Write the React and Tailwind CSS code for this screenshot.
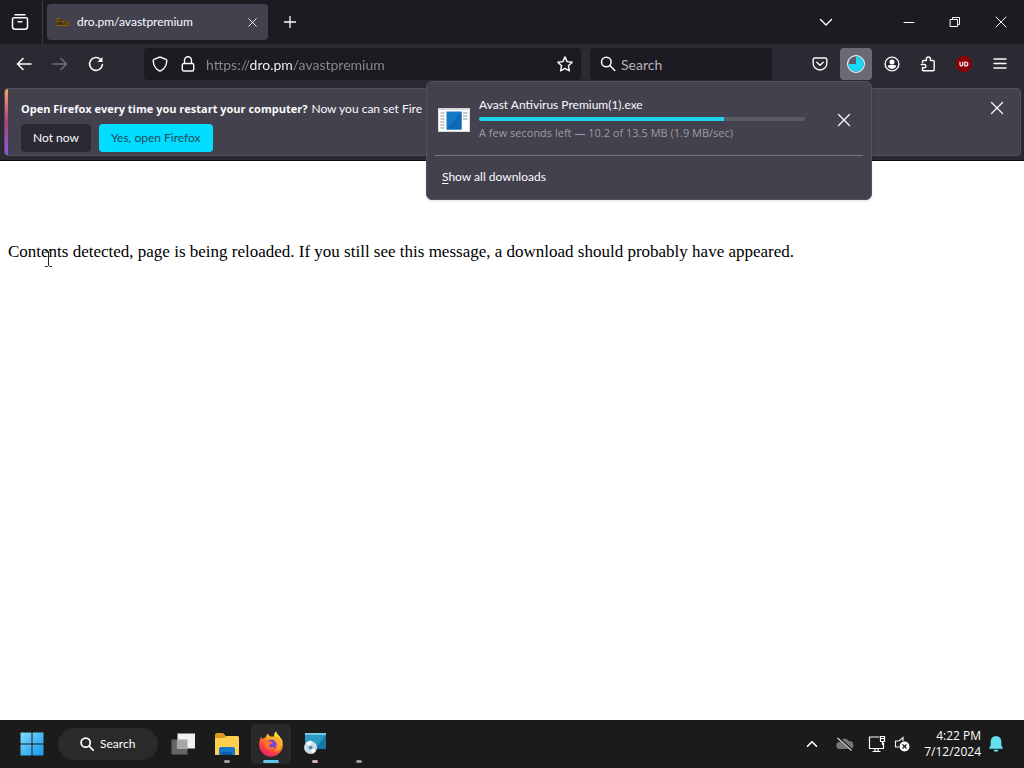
import React from "react";

function Icon({ children, className = "size-4", box = 16, width = 1.4, ...rest }) {
  return (
    <svg
      viewBox={`0 0 ${box} ${box}`}
      className={`shrink-0 ${className}`}
      fill="none"
      stroke="currentColor"
      strokeWidth={width}
      strokeLinecap="round"
      strokeLinejoin="round"
      aria-hidden="true"
      {...rest}
    >
      {children}
    </svg>
  );
}

function CloseIcon({ className = "size-4" }) {
  return (
    <Icon className={className} width={1.3}>
      <path d="M2.500 2.500l11 11M13.500 2.500l-11 11" />
    </Icon>
  );
}

function ToolButton({ label, className = "", children }) {
  return (
    <button
      type="button"
      aria-label={label}
      className={`flex size-8 shrink-0 items-center justify-center rounded ${className}`}
    >
      {children}
    </button>
  );
}

function WindowButton({ label, children }) {
  return (
    <button type="button" aria-label={label} className="flex h-11 w-[46px] items-center justify-center">
      {children}
    </button>
  );
}

function TabBar() {
  return (
    <div className="flex h-11 items-center bg-[#1c1b22]">
      <div className="flex h-11 w-[43px] items-center justify-center border-r border-[#3c3b44] pr-[2px]">
        <button type="button" aria-label="Firefox View" className="flex size-8 items-center justify-center">
          <Icon className="size-[18px]" box={18} width={1.500}>
            <path d="M4 1.800h10M2.800 4.800h12.400a1.300 1.300 0 0 1 1.300 1.300v7.600a2.500 2.500 0 0 1-2.500 2.500H4a2.500 2.500 0 0 1-2.500-2.500V6.100a1.300 1.300 0 0 1 1.300-1.300zM7.200 8.800h3.600" />
          </Icon>
        </button>
      </div>
      <div className="ml-1 flex h-9 w-[221px] items-center rounded bg-[#42414d] pr-2 pl-2">
        <svg viewBox="0 0 16 16" className="size-4 shrink-0" aria-hidden="true">
          <path d="M1 4h4l1 2h5l1 2h3v4H1z" fill="#554013" />
          <path d="M1 4.500h4M1 7h3M6 7.500h4M2 11.500h12M12 9h2.500" stroke="#8a6110" strokeWidth="1" />
          <path d="M4 8.500h3v2H4z" fill="#2d2a2e" />
        </svg>
        <span className="ml-[6px] flex-1 truncate">dro.pm/avastpremium</span>
        <button type="button" aria-label="Close tab" className="flex size-4 items-center justify-center">
          <CloseIcon className="size-[11px]" />
        </button>
      </div>
      <button type="button" aria-label="New tab" className="ml-[6px] flex size-8 items-center justify-center">
        <Icon className="size-4" width={1.300}>
          <path d="M8 2.500v11M2.500 8h11" />
        </Icon>
      </button>
      <div className="flex-1" />
      <ToolButton label="List all tabs" className="mr-11">
        <Icon>
          <path d="M2.500 5.500L8 11l5.500-5.500" />
        </Icon>
      </ToolButton>
      <WindowButton label="Minimize">
        <Icon className="size-3" box={12} width={1}>
          <path d="M1 6.500h10" />
        </Icon>
      </WindowButton>
      <WindowButton label="Restore">
        <Icon className="size-3" box={12} width={1}>
          <path d="M1.500 3.500h7v7h-7zM3.500 3.500v-2h7v7h-2" />
        </Icon>
      </WindowButton>
      <WindowButton label="Close">
        <Icon className="size-3" box={12} width={1}>
          <path d="M1 1l10 10M11 1L1 11" />
        </Icon>
      </WindowButton>
    </div>
  );
}

function NavBar() {
  return (
    <div className="flex h-10 items-center bg-[#2b2a33] px-2">
      <div className="flex gap-1">
        <ToolButton label="Back">
          <Icon width={1.600}>
            <path d="M15 8H1.500M7 2.500L1.500 8 7 13.500" />
          </Icon>
        </ToolButton>
        <ToolButton label="Forward" className="text-[#717079]">
          <Icon width={1.600}>
            <path d="M1 8h13.500M9 2.500L14.500 8 9 13.500" />
          </Icon>
        </ToolButton>
        <ToolButton label="Reload">
          <Icon width={1.600}>
            <path d="M13.200 4.200A6.400 6.400 0 1 0 14.400 8.500" />
            <path d="M14.500 1v5h-5z" fill="currentColor" stroke="none" />
          </Icon>
        </ToolButton>
      </div>
      <div className="ml-8 flex h-8 flex-1 items-center rounded bg-[#1c1b22] px-2">
        <Icon className="size-4">
          <path d="M8 1l6 2.300c.6.200.8.600.8 1.100C14.700 9 12.500 13 8 15.200 3.500 13 1.300 9 1.200 4.400c0-.5.200-.9.800-1.100z" />
        </Icon>
        <Icon className="ml-3 size-4">
          <path d="M3.800 7.500h8.400a1.500 1.500 0 0 1 1.500 1.500v4.500a1.500 1.500 0 0 1-1.500 1.500H3.800a1.500 1.500 0 0 1-1.500-1.500V9a1.500 1.500 0 0 1 1.500-1.500zM4.500 7.500V4.300a3.500 3.500 0 0 1 7 0v3.200" />
        </Icon>
        <input
          type="text"
          aria-label="Address"
          defaultValue="https://dro.pm/avastpremium"
          className="ml-[10px] h-6 min-w-0 flex-1 bg-[linear-gradient(90deg,#8a8992_44px,#fbfbfe_44px,#fbfbfe_87px,#8a8992_87px)] bg-clip-text text-sm text-transparent outline-none"
        />
        <button type="button" aria-label="Bookmark this page" className="flex size-4 items-center justify-center">
          <Icon>
            <path d="M8 .9l2.100 4.700 5.100.6-3.800 3.500 1 5.100L8 12.300l-4.400 2.500 1-5.100L.8 6.200l5.100-.6z" />
          </Icon>
        </button>
      </div>
      <div className="mr-8 ml-[9px] flex h-8 w-[182px] items-center rounded bg-[#1c1b22] px-[10px]">
        <Icon width={1.500}>
          <circle cx="6.300" cy="6" r="4.800" />
          <path d="M9.800 9.500l5 5" />
        </Icon>
        <input
          type="text"
          aria-label="Search"
          placeholder="Search"
          className="ml-[5px] h-6 w-full min-w-0 bg-transparent text-sm placeholder:text-[#b4b3ba] outline-none"
        />
      </div>
      <div className="flex gap-1">
        <ToolButton label="Save to Pocket">
          <Icon>
            <path d="M2.500 2h11a1.300 1.300 0 0 1 1.300 1.300v4.200a6.800 6.500 0 0 1-13.600 0V3.300A1.300 1.300 0 0 1 2.500 2zM4.800 6.200L8 9.300l3.200-3.100" />
          </Icon>
        </ToolButton>
        <ToolButton label="Downloads" className="bg-[#6b6a72]">
          <svg viewBox="0 0 20 20" className="size-5" aria-hidden="true">
            <circle cx="10" cy="10" r="8.400" fill="#5b5b66" stroke="#e8f8fc" strokeWidth="1.200" />
            <path d="M10 10V2.400A7.600 7.600 0 1 1 2.400 10z" fill="#16d9f5" />
          </svg>
        </ToolButton>
        <ToolButton label="Account">
          <Icon>
            <circle cx="8" cy="8" r="6.900" />
            <circle cx="8" cy="6" r="2.500" fill="currentColor" stroke="none" />
            <path d="M3.800 10.800c0-1 .7-1.800 1.700-1.800h5c1 0 1.700.8 1.700 1.800A5.200 5.200 0 0 1 8 12.900a5.200 5.200 0 0 1-4.200-2.100z" fill="currentColor" stroke="none" />
          </Icon>
        </ToolButton>
        <ToolButton label="Extensions">
          <Icon>
            <path d="M2.500 6.500V5.500A1 1 0 0 1 3.500 4.500H6.400V3a2 2 0 0 1 4 0v1.500h2.800a1 1 0 0 1 1 1v8.300a1 1 0 0 1-1 1H3.500a1 1 0 0 1-1-1V11.800H4.300a1.600 1.600 0 0 0 0-3.300H1.200" />
          </Icon>
        </ToolButton>
        <ToolButton label="uBlock Origin">
          <span className="flex size-4 items-center justify-center rounded-full bg-[#8b0009]">
            <Icon className="size-[10px]" box={10} width={1.200}>
              <path d="M1 3v2.400a1.400 1.400 0 0 0 2.800 0V3M5.800 3v4h1a2 2 0 0 0 0-4z" />
            </Icon>
          </span>
        </ToolButton>
        <ToolButton label="Open application menu">
          <Icon width={1.400}>
            <path d="M2 3h12M2 7.500h12M2 12h12" />
          </Icon>
        </ToolButton>
      </div>
    </div>
  );
}

function Notification() {
  return (
    <div className="border-b border-[#0c0c0d] bg-[#2b2a33] pt-1 pr-[3px] pb-1 pl-1">
      <div className="flex h-[68px] overflow-hidden rounded border border-[#52515d] bg-[#42414d]">
        <div className="w-[3px] shrink-0 bg-linear-to-b from-[#f5a35c] via-[#b83a78] to-[#8a55e8]" />
        <div className="min-w-0 flex-1 pt-3 pl-[13px]">
          <p className="flex items-baseline gap-1 whitespace-nowrap leading-4">
            <strong className="font-['Open_Sans',sans-serif] text-[11px] font-bold">
              Open Firefox every time you restart your computer?
            </strong>
            <span>Now you can set Fire</span>
          </p>
          <div className="mt-[7px] flex gap-2">
            <button type="button" className="h-7 rounded bg-[#2b2a33] px-3">Not now</button>
            <button type="button" className="h-7 rounded bg-[#00ddff] px-3 text-[#1f4a5a]">Yes, open Firefox</button>
          </div>
        </div>
        <button type="button" aria-label="Close notification" className="mt-[3px] mr-[7px] flex size-8 shrink-0 items-center justify-center">
          <CloseIcon />
        </button>
      </div>
    </div>
  );
}

function DownloadsPanel() {
  return (
    <section
      aria-label="Downloads"
      className="absolute top-[81px] right-[152px] z-10 w-[446px] rounded-md border border-[#52515e] bg-[#42414d] px-2 pb-[6px] shadow-sm"
    >
      <div className="flex h-[73px] items-center pt-[2px] pl-[3px]">
        <svg viewBox="0 0 32 24" className="h-6 w-8 shrink-0" aria-hidden="true">
          <path d="M0 0h32v24H0z" fill="#d5dade" />
          <path d="M1 2h30v21H1z" fill="#fff" />
          <path d="M8.500 3.500h15v18h-15z" fill="#1478c8" />
          <path d="M8.500 21.500l15-18v18z" fill="#1068b4" />
          <path d="M2.500 5h4M2.500 8h4M2.500 11h4M2.500 14h4M2.500 17h4M2.500 20h4M25 5h4.500M25 8h4.500M25 11h4.500" stroke="#87939c" />
        </svg>
        <div className="ml-[9px] w-[326px] pb-[2px]">
          <p className="leading-4">Avast Antivirus Premium(1).exe</p>
          <div
            role="progressbar"
            aria-label="Download progress"
            aria-valuemin={0}
            aria-valuemax={100}
            aria-valuenow={75}
            className="mt-1 h-1 overflow-hidden rounded-full bg-[#5b5a66]"
          >
            <div className="h-full w-3/4 bg-[#1bd5e8]" />
          </div>
          <p className="mt-1 font-['Open_Sans',sans-serif] text-[11px] leading-4 text-[#9d9ca6]">
            A few seconds left — 10.2 of 13.5 MB (1.9 MB/sec)
          </p>
        </div>
        <button type="button" aria-label="Cancel download" className="ml-[23px] flex size-8 items-center justify-center">
          <CloseIcon />
        </button>
      </div>
      <hr className="border-[#77767f]" />
      <button type="button" className="mt-[5px] flex h-8 w-full items-center pl-[7px]">
        <span><u className="underline-offset-2">S</u>how all downloads</span>
      </button>
    </section>
  );
}

function TaskButton({ label, active = false, indicator = "", children }) {
  return (
    <button
      type="button"
      aria-label={label}
      className={`flex h-10 w-10 flex-col items-center rounded pt-1 ${active ? "bg-[#292929]" : ""}`}
    >
      <span className="flex h-8 items-center">{children}</span>
      {indicator && <span className={`h-[3px] shrink-0 rounded-full ${indicator}`} />}
    </button>
  );
}

function Taskbar() {
  return (
    <footer className="flex h-12 items-center bg-[#1b1b1b] text-white">
      <button type="button" aria-label="Start" className="ml-3 flex size-10 items-center justify-center">
        <svg viewBox="0 0 24 24" className="size-6" aria-hidden="true">
          <defs>
            <linearGradient id="start" x1="0" y1="0" x2="1" y2="1">
              <stop offset="0" stopColor="#7fdcfb" />
              <stop offset="1" stopColor="#1697ef" />
            </linearGradient>
          </defs>
          <path d="M.5.5h11v11H.5zM12.500.5h11v11h-11zM.5 12.500h11v11H.5zM12.500 12.500h11v11h-11z" fill="url(#start)" />
        </svg>
      </button>
      <button type="button" className="ml-[6px] flex h-8 w-[100px] items-center rounded-full bg-[#2a2a2a] pl-[22px]">
        <Icon className="size-[14px]" width={2}>
          <circle cx="6.500" cy="6.500" r="5.200" />
          <path d="M10.500 10.500l4.500 4.500" />
        </Icon>
        <span className="ml-[6px]">Search</span>
      </button>
      <div className="ml-[5px] flex gap-1">
        <TaskButton label="Task view">
          <svg viewBox="0 0 24 24" className="size-6" aria-hidden="true">
            <path d="M.5 7.500h16v15H.5z" fill="#666" />
            <path d="M6.500 1.500h17.500v15H6.500z" fill="#f1f1f1" />
            <path d="M6.500 7.500h10v9h-10z" fill="#a6a6a6" />
          </svg>
        </TaskButton>
        <TaskButton label="File Explorer" indicator="w-[6px] bg-[#9a9a9a]">
          <svg viewBox="0 0 26 24" className="h-6 w-[26px]" aria-hidden="true">
            <path d="M1 3a2 2 0 0 1 2-2h6l3 3h11a2 2 0 0 1 2 2v4H1z" fill="#d99a1c" />
            <path d="M1 6h9l3-2h10a2 2 0 0 1 2 2v17H1z" fill="#ffd04d" />
            <path d="M5 23v-6a2 2 0 0 1 2-2h12a2 2 0 0 1 2 2v6z" fill="#1674c9" />
            <path d="M8 20h10v3H8z" fill="#0b5ba8" />
          </svg>
        </TaskButton>
        <TaskButton label="Firefox" active indicator="w-4 bg-[#5ec6ee]">
          <svg viewBox="0 0 26 26" className="size-[26px]" aria-hidden="true">
            <defs>
              <linearGradient id="fox" x1=".8" y1="0" x2=".25" y2="1">
                <stop offset="0" stopColor="#fff04a" />
                <stop offset=".35" stopColor="#ffac1f" />
                <stop offset=".65" stopColor="#ff4c39" />
                <stop offset="1" stopColor="#e3197b" />
              </linearGradient>
            </defs>
            <path d="M3.500 5.500c0 1.200.2 1.800.8 2.400C5.500 7 6.500 6.600 7.700 6.500 8 4.700 9 3.400 10.400 2.500c0 1.700 1 2.700 2.600 3.200 1-.2 2-.2 3 .1C15.800 3.500 16.700 1.500 18.300.3c.3 2 1.400 3 2.800 4.500 1.100 1.200 1.700 2.200 2 3.400l.5-.8c.8 1.900 1.200 4 1.200 6.300A11.800 11.800 0 0 1 1.200 14C1 10.800 1.800 7.800 3.500 5.500z" fill="url(#fox)" />
            <circle cx="13.500" cy="13.500" r="5" fill="#7545d8" />
            <path d="M6.500 9.500c2.500-.8 4.500-.2 5.700 1.200 1.600.1 2.800.2 2.700 1-.2.900-2 1.200-2.900 1.800-1 .7-.8 2.200.5 2.800 1.500.7 3-.4 4.400.2-1 2-3.200 2.900-5.600 2.400-3.600-.8-5.700-4.500-4.800-9.400z" fill="#ff702c" />
            <path d="M16 7c3 1.500 5 4.500 4 8.300-.5 2.500-2.500 4.500-5 5 5.500.5 9-3.500 8-8.500-.5-2.500-2.500-4-4-6z" fill="#ffa62e" />
          </svg>
        </TaskButton>
        <TaskButton label="Installer" indicator="w-[6px] bg-[#e3a9ad]">
          <svg viewBox="0 0 24 24" className="size-6" aria-hidden="true">
            <path d="M2 1h21v16H2z" fill="#299ac4" />
            <path d="M2 1h21v2H2z" fill="#77c9df" />
            <path d="M12 17L23 3v14z" fill="#1878a4" />
            <circle cx="7.500" cy="15.500" r="6.500" fill="#cbdde4" />
            <path d="M7.500 15.500L3 11a6.500 6.500 0 0 1 6-2zM7.500 15.500l5.500 3a6.500 6.500 0 0 1-4 3.300z" fill="#f7fbfc" />
            <circle cx="7.500" cy="15.500" r="2" fill="#4b93b3" />
          </svg>
        </TaskButton>
        <TaskButton label="Running application" indicator="w-[6px] bg-[#9a9a9a]" />
      </div>
      <div className="flex-1" />
      <button type="button" aria-label="Show hidden icons" className="mr-[18px] flex h-10 items-center">
        <Icon className="size-3" width={2.200}>
          <path d="M2 11l6-6 6 6" />
        </Icon>
      </button>
      <svg viewBox="0 0 18 16" className="mr-[14px] h-4 w-[18px]" role="img" aria-label="OneDrive">
        <path d="M4 13a3.500 3.500 0 0 1-.5-7A5 5 0 0 1 12.500 5 4 4 0 0 1 14 13z" fill="#777" />
        <path d="M2 1.500l14 13" stroke="#1b1b1b" strokeWidth="3" />
        <path d="M1.500 2l14 12.500" stroke="#d5d5d5" strokeWidth="1.200" />
      </svg>
      <Icon className="mr-2 h-[18px] w-[18px]" box={18} width={1.200}>
        <path d="M11 2H1.500v11.500h14V8M5 16.500h7M7 13.500v3M10 13.500v3M12.500 1.500h4v5h-4zM14.500 6.500v3M12.500 3.500h4" />
      </Icon>
      <svg viewBox="0 0 16 16" className="size-4" role="img" aria-label="Volume muted">
        <path d="M9 5V1.500L5 5H1.500v6H5" fill="none" stroke="#eee" strokeWidth="1.200" />
        <circle cx="10.500" cy="10.500" r="5" fill="#fff" />
        <path d="M8.500 8.500l4 4M12.500 8.500l-4 4" stroke="#1b1b1b" strokeWidth="1.200" />
      </svg>
      <div className="w-[71px] text-right font-['Open_Sans',sans-serif] leading-4">
        <p>4:22 PM</p>
        <p>7/12/2024</p>
      </div>
      <button type="button" aria-label="Notifications" className="mr-5 ml-[7px] flex h-10 items-center">
        <svg viewBox="0 0 16 16" className="size-4" aria-hidden="true">
          <path d="M8 0a5.300 5.300 0 0 1 5.300 5.300v3.900l1.500 2.700c.2.500 0 .9-.5.900H1.700c-.5 0-.7-.4-.5-.9l1.500-2.700V5.300A5.300 5.300 0 0 1 8 0zM5.500 13.700h5a2.500 2 0 0 1-5 0z" fill="#67e1f2" />
        </svg>
      </button>
    </footer>
  );
}

export default function App() {
  return (
    <div className="relative flex min-h-screen flex-col bg-white font-[Lato,'Open_Sans',sans-serif] text-xs">
      <header className="text-[#fbfbfe]">
        <TabBar />
        <NavBar />
        <Notification />
        <DownloadsPanel />
      </header>
      <main className="relative flex-1 px-2 pt-[79px] font-['Liberation_Serif',serif] text-[17px] leading-6 text-black">
        <p>Contents detected, page is being reloaded. If you still see this message, a download should probably have appeared.</p>
        <svg viewBox="0 0 9 17" className="absolute top-[89px] left-11 h-[17px] w-[9px]" aria-hidden="true">
          <path d="M1 .5h2.500l1 1 1-1H8M4.500 1.500v14M1 16.500h2.500l1-1 1 1H8" fill="none" stroke="#222" />
        </svg>
      </main>
      <Taskbar />
    </div>
  );
}
